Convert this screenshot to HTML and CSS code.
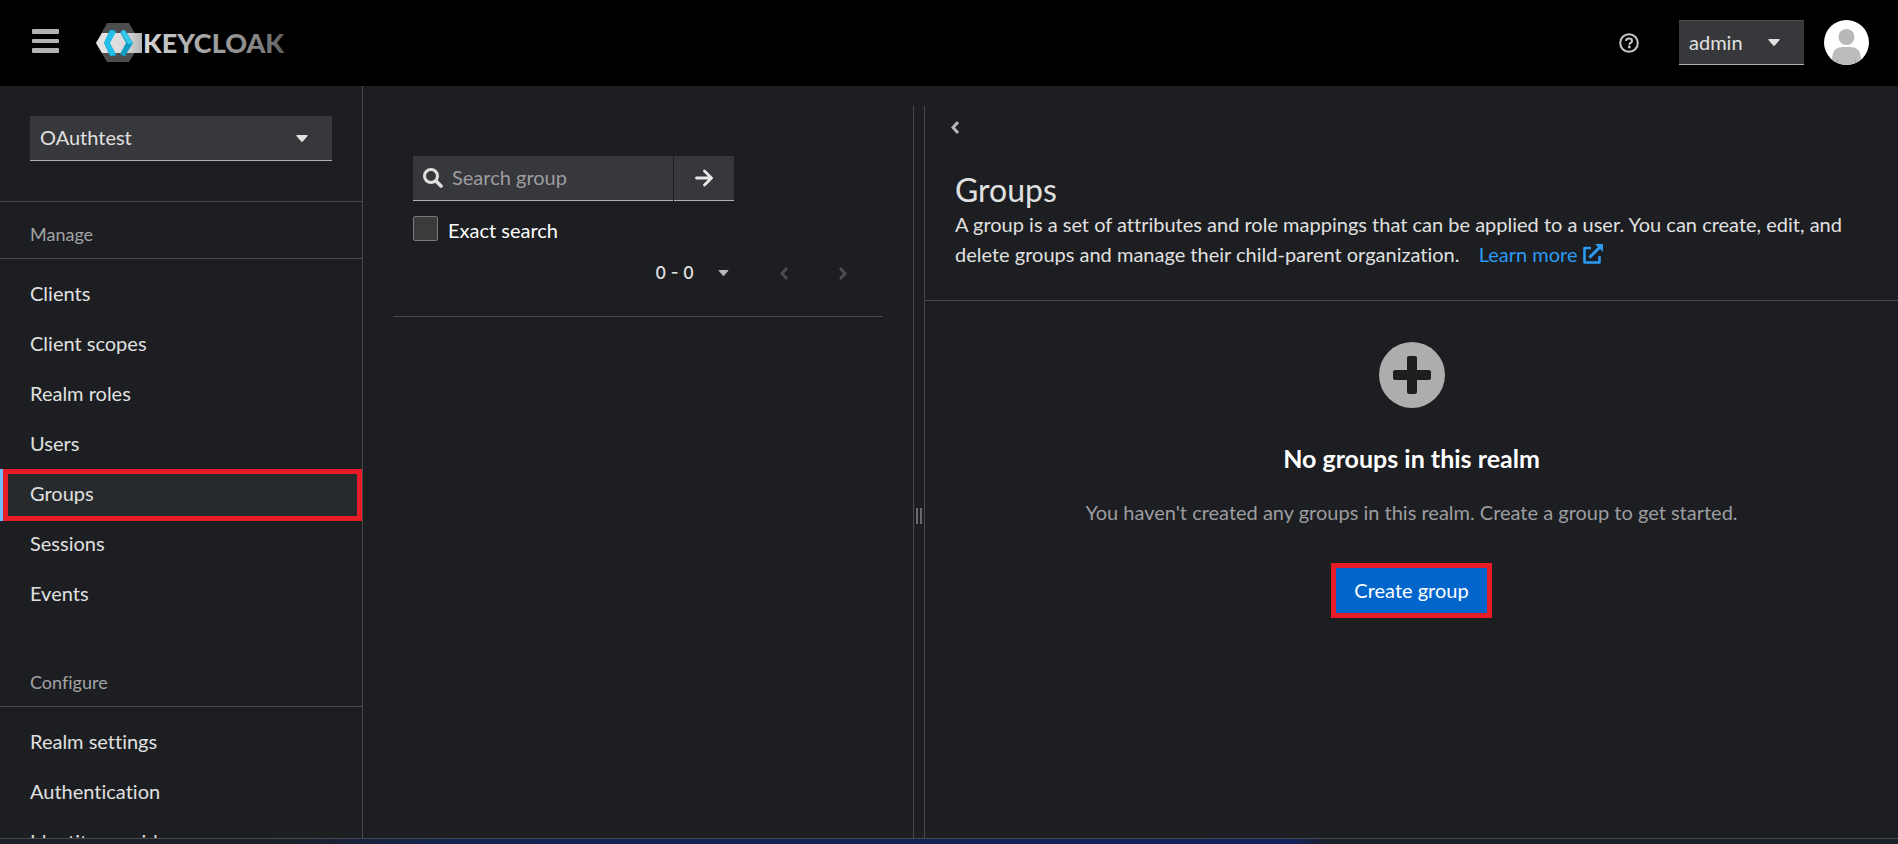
FILE: index.html
```html
<!DOCTYPE html>
<html lang="en">
<head>
<meta charset="utf-8">
<meta name="viewport" content="width=device-width, initial-scale=1">
<title>Groups - Keycloak</title>
<link rel="stylesheet" href="styles.css">
</head>
<body>
<div class="page">
  <header class="masthead">
    <button class="icon-button menu-toggle" type="button" aria-label="Toggle navigation">
      <svg width="27" height="24" viewBox="0 0 27 24" fill="#b3b3b3"><rect width="27" height="5" rx="1"/><rect y="10" width="27" height="4" rx="1"/><rect y="19" width="27" height="5" rx="1"/></svg>
    </button>
    <a class="brand" href="#" aria-label="Keycloak">
      <svg class="brand-mark" width="192" height="40" viewBox="0 0 192 40">
        <defs>
          <linearGradient id="band" x1="0" y1="0" x2="1" y2="0"><stop offset="0" stop-color="#e4e4e4"/><stop offset="0.6" stop-color="#dcdcdc"/><stop offset="1" stop-color="#b4b4b4"/></linearGradient>
          <linearGradient id="word" x1="0" y1="0" x2="1" y2="0"><stop offset="0" stop-color="#d8d8d8"/><stop offset="0.35" stop-color="#adadad"/><stop offset="0.8" stop-color="#858585"/><stop offset="1" stop-color="#5c5c5c"/></linearGradient>
        </defs>
        <path d="M11 0h22l8 14v12l-8 13H11L0 20z" fill="#4d4d4d"/>
        <path d="M6 10h40v20H6L0 20z" fill="url(#band)"/>
        <path d="M14 7h6l-7 13 7 13h-6L8 20z" fill="#129bc4"/>
        <path d="M14 7l6 2-6 11 6 11-5 2-7-13z" fill="#22bfe8"/>
        <path d="M27 7l-3 2 6 11-6 11 3 2h2l8-13-8-13z" fill="#129bc4"/>
        <path d="M28 7l9 13-5 1-7-12z" fill="#35c9ee"/>
        <text x="47" y="30" class="brand-word" fill="url(#word)">KEYCLOAK</text>
      </svg>
    </a>
    <div class="masthead-tools">
      <button class="icon-button" type="button" aria-label="Help">
        <svg width="20" height="20" viewBox="0 0 20 20" fill="none"><circle cx="10" cy="10" r="8.8" stroke="#c8c8c8" stroke-width="2"/><path d="M7 7.8C7.2 6.3 8.5 5.6 10 5.6c1.700 0 3 .9 3 2.400 0 2-2.600 1.800-2.600 3.700" stroke="#c8c8c8" stroke-width="2"/><circle cx="10.300" cy="14" r="1.400" fill="#c8c8c8"/></svg>
      </button>
      <button class="dropdown user-menu" type="button"><span>admin</span><svg class="caret" width="12" height="7" viewBox="0 0 12 7"><path d="M1 0h10q1.200.3.4 1.200L6.800 6.500q-.8.8-1.600 0L.6 1.200Q-.2.3 1 0z"/></svg></button>
      <svg class="avatar" width="45" height="45" viewBox="0 0 45 45" role="img" aria-label="User avatar"><defs><clipPath id="disc"><circle cx="22.500" cy="22.500" r="22.500"/></clipPath></defs><g clip-path="url(#disc)"><rect width="45" height="45" fill="#fff"/><circle cx="22.500" cy="17" r="8" fill="#b8b8b8"/><path d="M8 45V38q1-11 10-11h9q9 0 10 11v7z" fill="#bcbcbc"/><path d="M14 38v7h-3zM31 38v7h3z" fill="#a8a8a8"/></g></svg>
    </div>
  </header>
  <div class="body">
    <nav class="sidebar" aria-label="Global">
      <div class="realm">
        <button class="dropdown" type="button"><span>OAuthtest</span><svg class="caret" width="12" height="7" viewBox="0 0 12 7"><path d="M1 0h10q1.200.3.4 1.200L6.800 6.500q-.8.8-1.600 0L.6 1.200Q-.2.3 1 0z"/></svg></button>
      </div>
      <section class="nav-section">
        <h2 class="nav-title">Manage</h2>
        <ul class="nav-list">
          <li><a class="nav-link" href="#">Clients</a></li>
          <li><a class="nav-link" href="#">Client scopes</a></li>
          <li><a class="nav-link" href="#">Realm roles</a></li>
          <li><a class="nav-link" href="#">Users</a></li>
          <li><a class="nav-link current" href="#" aria-current="page">Groups</a></li>
          <li><a class="nav-link" href="#">Sessions</a></li>
          <li><a class="nav-link" href="#">Events</a></li>
        </ul>
      </section>
      <section class="nav-section">
        <h2 class="nav-title">Configure</h2>
        <ul class="nav-list">
          <li><a class="nav-link" href="#">Realm settings</a></li>
          <li><a class="nav-link" href="#">Authentication</a></li>
          <li><a class="nav-link" href="#">Identity providers</a></li>
        </ul>
      </section>
    </nav>
    <main class="content">
      <section class="tree">
        <form class="tree-tools">
          <div class="search">
            <label class="search-field"><svg width="20" height="20" viewBox="0 0 20 20" fill="none" stroke="#e0e0e0"><circle cx="8" cy="8" r="6.500" stroke-width="3"/><path d="M13 13l5 5" stroke-width="3.600" stroke-linecap="round"/></svg><input type="text" placeholder="Search group" aria-label="Search group"></label>
            <button class="search-go" type="button" aria-label="Search"><svg width="18" height="18" viewBox="0 0 18 18" fill="none" stroke="#e8e8e8" stroke-width="2.800" stroke-linecap="round" stroke-linejoin="round"><path d="M1.500 9h14M9.500 2l7 7-7 7"/></svg></button>
          </div>
          <label class="exact"><input type="checkbox"><span>Exact search</span></label>
          <div class="pager">
            <button class="pager-range" type="button"><span>0 - 0</span><svg class="caret" width="11" height="6" viewBox="0 0 12 7"><path d="M1 0h10q1.200.3.4 1.200L6.800 6.500q-.8.8-1.600 0L.6 1.200Q-.2.3 1 0z"/></svg></button>
            <button class="icon-button" type="button" aria-label="Previous page" disabled><svg width="8" height="13" viewBox="0 0 8 13" fill="none" stroke="#4c4d50" stroke-width="2.800"><path d="M7 1L2 6.500 7 12"/></svg></button>
            <button class="icon-button" type="button" aria-label="Next page" disabled><svg width="8" height="13" viewBox="0 0 8 13" fill="none" stroke="#4c4d50" stroke-width="2.800"><path d="M1 1l5 5.500L1 12"/></svg></button>
          </div>
        </form>
      </section>
      <div class="splitter" role="separator" aria-orientation="vertical"><span></span><span></span></div>
      <section class="detail">
        <div class="detail-bar">
          <button class="icon-button" type="button" aria-label="Collapse tree"><svg width="8" height="13" viewBox="0 0 8 13" fill="none" stroke="#b4b4b6" stroke-width="3"><path d="M7 1L2 6.500 7 12"/></svg></button>
        </div>
        <header class="intro">
          <h1>Groups</h1>
          <p>A group is a set of attributes and role mappings that can be applied to a user. You can create, edit, and delete groups and manage their child-parent organization. <a class="learn" href="#">Learn more <svg width="20" height="20" viewBox="0 0 20 20"><path d="M8 4H1.500v14.500h15V12" fill="none" stroke="currentColor" stroke-width="2.600" stroke-linejoin="round"/><path d="M6.500 13.500L16.500 3.500" stroke="currentColor" stroke-width="3"/><path d="M12 0h8v8z" fill="currentColor"/></svg></a></p>
        </header>
        <div class="empty">
          <svg width="66" height="66" viewBox="0 0 66 66"><circle cx="33" cy="33" r="33" fill="#adadad"/><path d="M30 14h6q2 0 2 2v12h12q2 0 2 2v6q0 2-2 2H38v12q0 2-2 2h-6q-2 0-2-2V38H16q-2 0-2-2v-6q0-2 2-2h12V16q0-2 2-2z" fill="#1c1e20"/></svg>
          <h2>No groups in this realm</h2>
          <p>You haven't created any groups in this realm. Create a group to get started.</p>
          <button class="primary" type="button">Create group</button>
        </div>
      </section>
    </main>
  </div>
  <footer class="edge"></footer>
</div>
</body>
</html>
```
FILE: styles.css
```css
* { box-sizing: border-box; }
body { margin: 0; background: #1c1e21; color: #e0e0e0; font: 400 20px/30px Lato, "Open Sans", sans-serif; font-variant-ligatures: none; }
button, input { font: inherit; font-variant-ligatures: none; color: inherit; margin: 0; border-radius: 0; }
button { cursor: pointer; }
h1, h2, p, ul { margin: 0; padding: 0; font-weight: 400; }
a { color: inherit; text-decoration: none; }
svg { display: block; flex: none; }
.page { height: 100vh; display: flex; flex-direction: column; overflow: hidden; }
.icon-button { display: flex; border: 0; padding: 0; background: none; }

.masthead { height: 86px; flex: none; display: flex; align-items: center; padding: 0 29px 0 32px; background: #000; }
.menu-toggle { padding-bottom: 4px; }
.brand { margin-left: 37px; }
.brand-word { font: 900 27px Lato, sans-serif; }
.masthead-tools { margin-left: auto; padding-bottom: 1px; display: flex; align-items: center; }
.dropdown { display: flex; align-items: center; justify-content: space-between; width: 100%; height: 45px; padding: 0 24px 0 10px; border: 0; border-bottom: 1px solid #b0b0b2; background: #37383b; }
.dropdown span { padding-bottom: 2px; }
.caret { fill: #e0e0e0; }
.user-menu { width: 125px; margin: 0 20px 0 40px; border-top: 1px solid #4a4b4d; }

.body { flex: 1; min-height: 0; display: flex; }
.sidebar { width: 363px; flex: none; border-right: 1px solid #47484b; overflow: hidden; }
.realm { padding: 30px 30px 40px; border-bottom: 1px solid #47484b; }
.nav-title { padding: 17px 30px 9px; border-bottom: 1px solid #47484b; font-size: 18px; color: #a3a3a5; }
.nav-list { list-style: none; padding: 10px 0; }
.nav-link { display: block; height: 50px; padding: 9px 30px 11px; }
.nav-section + .nav-section { padding-top: 21px; }
.current { height: 52px; margin: 0 0 -2px 3px; padding: 4px 22px; border: 5px solid #e81c26; background: #272a2c; box-shadow: -3px 0 #73bcf7; }

.content { flex: 1; min-width: 0; display: flex; padding-top: 20px; }
.tree { width: 550px; flex: none; padding: 0 30px; }
.tree-tools { padding: 50px 20px 28px; border-bottom: 1px solid #47484b; }
.search { display: flex; gap: 1px; }
.search-field { display: flex; align-items: center; gap: 9px; width: 260px; height: 45px; padding: 0 10px; border-bottom: 1px solid #b0b0b2; background: #37383b; }
.search-field input { width: 100%; min-width: 0; border: 0; padding: 0 0 2px; outline: 0; background: none; }
.search-field input::placeholder { color: #9c9da0; opacity: 1; }
.search-go { width: 60px; display: flex; align-items: center; justify-content: center; padding: 0; border: 0; border-bottom: 1px solid #b0b0b2; background: #37383b; }
.exact { display: flex; align-items: flex-end; gap: 10px; margin-top: 14px; color: #fff; }
.exact input { appearance: none; width: 25px; height: 25px; margin-bottom: 4px; border: 1px solid #77797b; border-radius: 2px; background: #3a3c3c; }
.pager { display: flex; align-items: center; justify-content: flex-end; gap: 51px; margin-top: 13px; padding-right: 16px; }
.pager-range { display: flex; align-items: center; gap: 24px; padding: 0; border: 0; background: none; font: 500 17px/30px Inter, sans-serif; }
.pager-range .caret { fill: #b8b8ba; }

.splitter { width: 12px; flex: none; display: flex; align-items: center; justify-content: center; gap: 2px; border: solid #47484b; border-width: 0 1px; padding-top: 88px; }
.splitter span { width: 2px; height: 16px; background: #6a6b6e; }

.detail { flex: 1; min-width: 0; }
.detail-bar { padding: 15px 26px; }
.intro { padding: 21px 30px 31px; border-bottom: 1px solid #47484b; }
.intro h1 { font-size: 32px; line-height: 39px; }
.learn { margin-left: 14px; color: #2b9af3; white-space: nowrap; }
.learn svg { display: inline-block; vertical-align: -2px; }
.empty { display: flex; flex-direction: column; align-items: center; padding: 41px 30px; text-align: center; }
.empty h2 { margin-top: 34px; font-size: 25px; line-height: 32px; font-weight: 700; color: #fff; }
.empty p { margin-top: 23px; color: #9c9da0; }
.primary { height: 55px; margin-top: 36px; padding: 0 18px 2px; border: 5px solid #e81c26; background: #06c; color: #fff; }

.edge { flex: none; height: 6px; border-top: 1px solid #47484b; background: linear-gradient(90deg, #1d2127 0%, #1d2127 14%, #12234f 24%, #12235c 68%, #1c2028 70%); }
```
